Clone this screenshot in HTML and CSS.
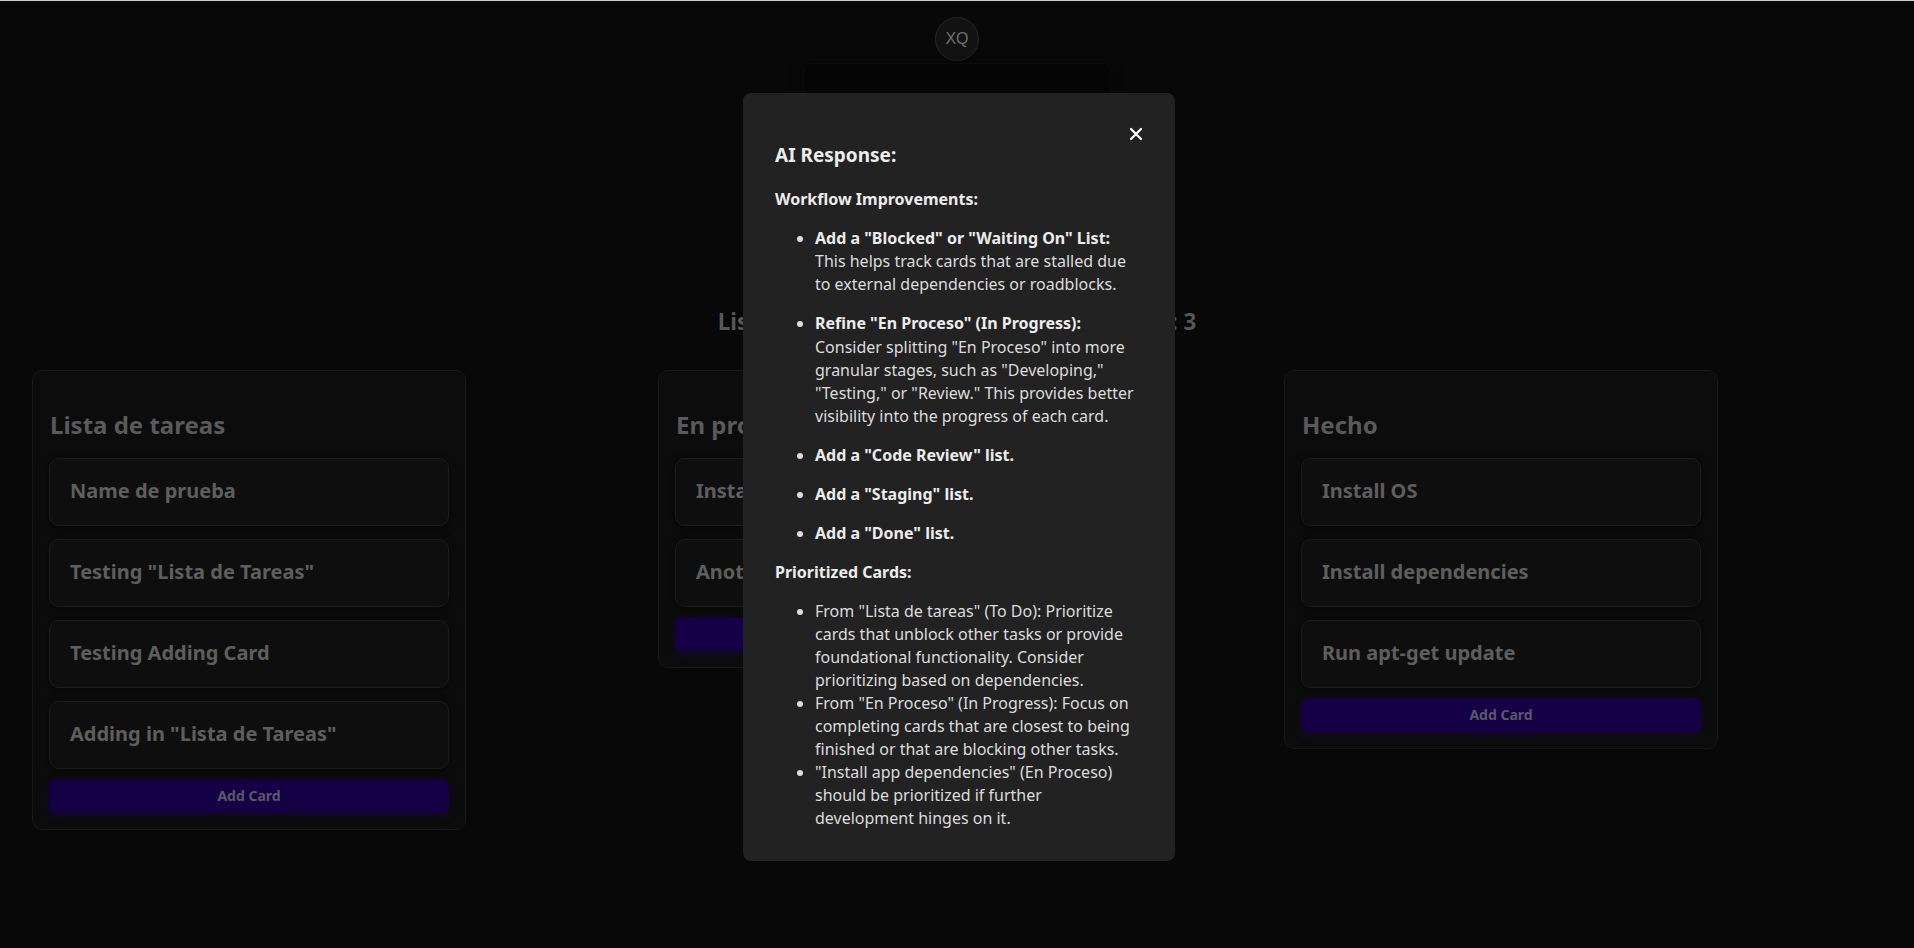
FILE: index.html
```html
<!DOCTYPE html>
<html>
  <head>
    <meta charset="utf-8">
    <meta name="viewport" content="width=device-width, initial-scale=1">
    <title>Tablero</title>
    <link rel="stylesheet" href="styles.css">
  </head>
  <body>
    <header class="top-bar">
      <div class="avatar">XQ</div>
      <div class="prompt-box"></div>
      <h3 class="summary">Listas: 3 · Tarjetas totales: 9 · Terminadas: 3</h3>
    </header>

    <section class="board">
      <div class="list">
        <h2 class="list-title">Lista de tareas</h2>
        <div class="card">Name de prueba</div>
        <div class="card">Testing "Lista de Tareas"</div>
        <div class="card">Testing Adding Card</div>
        <div class="card">Adding in "Lista de Tareas"</div>
        <button class="add-button">Add Card</button>
      </div>
      <div class="list">
        <h2 class="list-title">En proceso</h2>
        <div class="card">Install app dependencies</div>
        <div class="card">Another task in progress</div>
        <button class="add-button">Add Card</button>
      </div>
      <div class="list">
        <h2 class="list-title">Hecho</h2>
        <div class="card">Install OS</div>
        <div class="card">Install dependencies</div>
        <div class="card">Run apt-get update</div>
        <button class="add-button">Add Card</button>
      </div>
    </section>

    <!-- AI response modal -->
    <div class="modal">
      <button class="close-button" aria-label="Close">
        <svg width="14" height="14" viewBox="0 0 14 14">
          <path d="M2 2 L12 12 M12 2 L2 12" stroke="#fff" stroke-width="2.2" stroke-linecap="round"/>
        </svg>
      </button>
      <h3 class="modal-title">AI Response:</h3>
      <p><strong>Workflow Improvements:</strong></p>
      <ul class="loose">
        <li><p><strong>Add a "Blocked" or "Waiting On" List:</strong> This helps track cards that are stalled due to external dependencies or roadblocks.</p></li>
        <li><p><strong>Refine "En Proceso" (In Progress):</strong> Consider splitting "En Proceso" into more granular stages, such as "Developing," "Testing," or "Review." This provides better visibility into the progress of each card.</p></li>
        <li><p><strong>Add a "Code Review" list.</strong></p></li>
        <li><p><strong>Add a "Staging" list.</strong></p></li>
        <li><p><strong>Add a "Done" list.</strong></p></li>
      </ul>
      <p><strong>Prioritized Cards:</strong></p>
      <ul>
        <li>From "Lista de tareas" (To Do): Prioritize cards that unblock other tasks or provide foundational functionality. Consider prioritizing based on dependencies.</li>
        <li>From "En Proceso" (In Progress): Focus on completing cards that are closest to being finished or that are blocking other tasks.</li>
        <li>"Install app dependencies" (En Proceso) should be prioritized if further development hinges on it.</li>
      </ul>
    </div>
  </body>
</html>
```

FILE: styles.css
```css
body {
  margin: 0;
  min-height: 947px;
  background-color: #080808;
  border-top: 1px solid #cfcfcf;
  font-family: "Noto Sans", "Open Sans", sans-serif;
  line-height: 1.44;
}
.top-bar {
  display: flex;
  flex-direction: column;
  align-items: center;
  padding-top: 16px;
}
.avatar {
  width: 42px;
  height: 42px;
  border-radius: 50%;
  border: 1px solid #262626;
  background-color: #121212;
  color: #6f6f6f;
  font-family: "Liberation Sans", sans-serif;
  font-size: 16px;
  display: flex;
  align-items: center;
  justify-content: center;
}
.prompt-box {
  width: 306px;
  height: 210px;
  margin-top: 2px;
  background-color: #050505;
  border: 1px solid #0b0b0b;
  border-radius: 8px;
  box-shadow: 0 0 12px rgba(0, 0, 0, 0.5);
}
.summary {
  margin: 31px 0 0;
  font-size: 22.4px;
  font-weight: bold;
  color: #575757;
}
.board {
  display: flex;
  align-items: flex-start;
  gap: 192px;
  padding-left: 32px;
  margin-top: 32px;
}
.list {
  width: 400px;
  padding: 16px 16px 16px;
  background-color: #0c0c0c;
  border: 1px solid #181818;
  border-radius: 10px;
  display: flex;
  flex-direction: column;
  gap: 13px;
}
.list-title {
  margin: 21px 0 2px 1px;
  font-size: 24px;
  font-weight: bold;
  color: #5a5a5a;
}
.card {
  height: 66px;
  padding: 0 20px;
  display: flex;
  align-items: center;
  background-color: #0e0e0e;
  border: 1px solid #1c1c1c;
  border-radius: 10px;
  box-shadow: 0 2px 8px rgba(0, 0, 0, 0.5);
  color: #5e5e5e;
  font-size: 20px;
  font-weight: bold;
}
.add-button {
  height: 34px;
  margin-top: -3px;
  border: none;
  border-radius: 6px;
  background-color: #150045;
  box-shadow: 0 4px 10px rgba(30, 0, 80, 0.3);
  color: #5b5868;
  font-family: "Noto Sans", sans-serif;
  font-size: 14px;
  font-weight: bold;
}

/* modal */
.modal {
  position: absolute;
  top: 93px;
  left: 743px;
  width: 368px;
  padding: 49px 32px 15px;
  background-color: #222222;
  border-radius: 8px;
  color: #dcdcdc;
  font-size: 16px;
}
.close-button {
  position: absolute;
  top: 34px;
  right: 32px;
  padding: 0;
  border: none;
  background: none;
}
.modal-title {
  margin: 0 0 19px;
  font-size: 19px;
  color: #ececec;
}
.modal p {
  margin: 16px 0;
}
.modal strong {
  color: #ececec;
}
.modal ul {
  margin: 16px 0;
  padding-left: 40px;
}
```
